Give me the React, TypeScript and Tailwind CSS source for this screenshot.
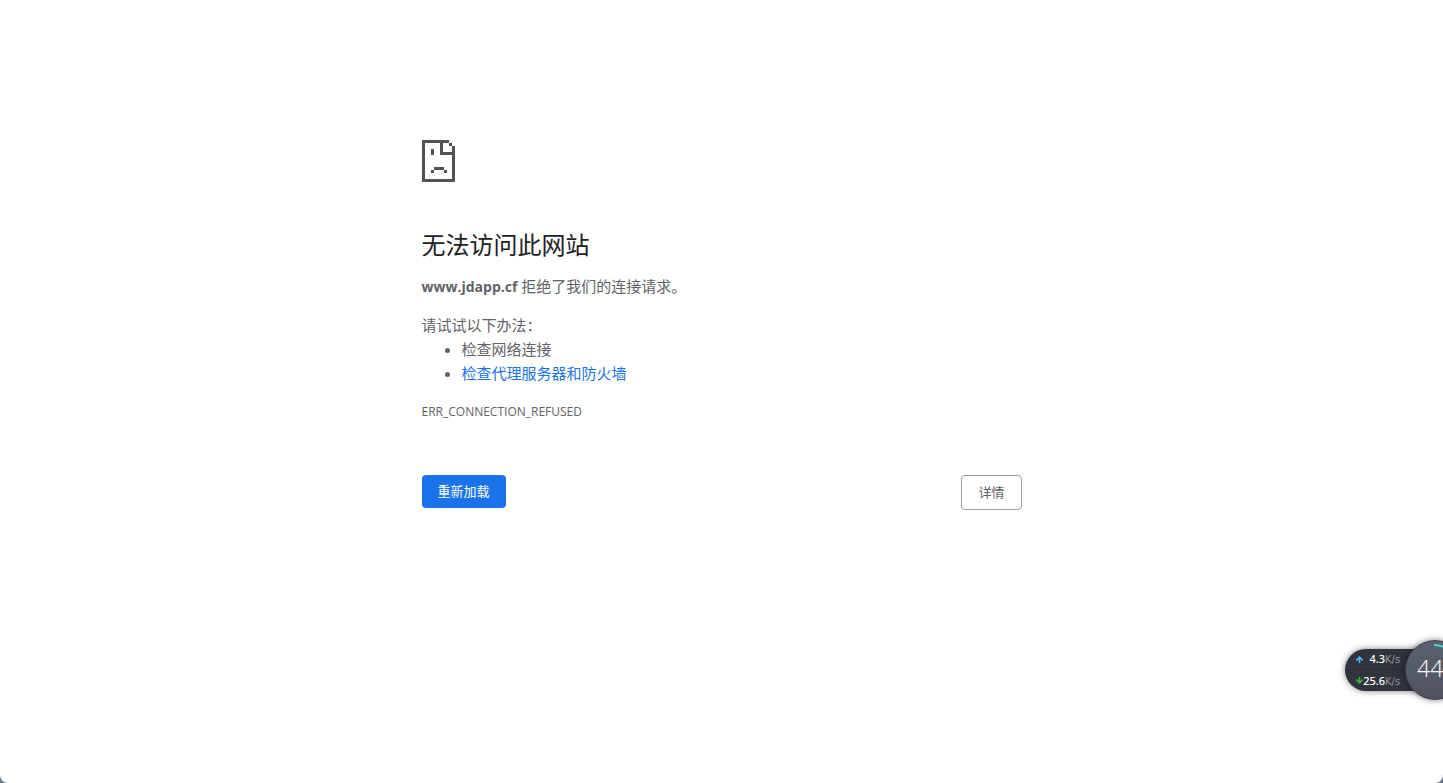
import React from 'react';

const SUGGESTIONS = [
  { text: '检查网络连接', href: '' },
  { text: '检查代理服务器和防火墙', href: '#proxy' },
];

function SadPageIcon() {
  return (
    <svg width="33" height="42" viewBox="0 0 33 42" fill="#535353" shapeRendering="crispEdges" aria-hidden="true">
      <path d="M0 0h27v3h3v3h3v36H0zM3 3v36h27V15H18V3zM21 3v9h9V6h-3V3z" fillRule="evenodd" />
      <path d="M9 9h3v6H9zM12 27h10v3H12zM9 30h3v3H9zM22 30h3v3h-3z" />
    </svg>
  );
}

function SpeedArrow({ up }: { up?: boolean }) {
  return (
    <svg width="7" height="7" viewBox="0 0 7 7" fill={up ? '#4db8f0' : '#35b53c'} aria-hidden="true">
      <path d={up ? 'M3.5 0L7 3.5v1.2H5.8L4.3 3.2V7H2.7V3.2L1.2 4.7H0V3.5z' : 'M3.5 7L7 3.5V2.3H5.8L4.3 3.8V0H2.7v3.8L1.2 2.3H0v1.2z'} />
    </svg>
  );
}

function SpeedRow({ value, up }: { value: string; up?: boolean }) {
  return (
    <div className="flex h-[21px] items-center pl-[11px]">
      <SpeedArrow up={up} />
      <span className="flex w-[22px] justify-end text-[11px] font-medium text-white">{value}</span>
      <span className="pt-0.5 font-['DejaVu_Sans',sans-serif] text-[10px] text-[#92959c]">K/s</span>
    </div>
  );
}

function NetworkWidget() {
  return (
    <div className="absolute right-0 top-[632px] h-[76px] w-[110px] overflow-hidden font-['Noto_Sans',sans-serif]">
      <div className="absolute left-3 top-[17px] h-[42px] w-[98px] divide-y divide-[#292d35] rounded-l-full bg-[#30343d] shadow-[0_0_6px_rgba(0,0,0,0.5)]">
        <SpeedRow value="4.3" up />
        <SpeedRow value="25.6" />
      </div>
      <div className="absolute left-[72px] top-2 h-[60px] w-[60px] rounded-full border border-[#3c404b] bg-linear-to-b from-[#5c6270] to-[#4e535f] shadow-[0_0_6px_rgba(0,0,0,0.5)]">
        <svg className="absolute inset-0" width="58" height="58" viewBox="0 0 58 58" fill="none" aria-hidden="true">
          <path d="M28 4a25 25 0 0 1 14 4.3" stroke="#3fd9cf" strokeWidth="2" />
        </svg>
        <span className="absolute left-[11px] top-3 font-['Open_Sans',sans-serif] text-[23px] leading-[30px] font-light text-white">44</span>
      </div>
    </div>
  );
}

export default function App() {
  return (
    <div className="min-h-screen bg-[#6b7785]">
      <div className="relative min-h-screen overflow-hidden rounded-b-lg bg-white px-6 pt-[140px] font-['Open_Sans','Noto_Sans_CJK_SC',sans-serif] text-[15px] leading-6 text-[#5f6368]" lang="zh-CN">
        <main className="mx-auto max-w-[600px]">
          <SadPageIcon />
          <h1 className="mt-[47px] font-['Noto_Sans_CJK_SC',sans-serif] text-2xl leading-[30px] text-[#202124]">无法访问此网站</h1>
          <p className="mt-[15px]">
            <strong className="text-sm leading-6 font-bold">www.jdapp.cf</strong> 拒绝了我们的连接请求。
          </p>
          <p className="mt-3.5">请试试以下办法：</p>
          <ul className="list-disc pl-10">
            {SUGGESTIONS.map((s) => (
              <li key={s.text}>
                {s.href ? <a href={s.href} className="text-[#1a73e8]">{s.text}</a> : s.text}
              </li>
            ))}
          </ul>
          <div className="mt-[15px] text-xs leading-6">ERR_CONNECTION_REFUSED</div>

          <div className="mt-[51px] flex items-start justify-between text-[13px] leading-[17px]">
            <button type="button" className="rounded bg-[#1a73e8] px-4 py-2 text-white">重新加载</button>
            <button type="button" className="rounded border border-[#9aa0a6] bg-white px-4 py-2">详情</button>
          </div>
        </main>
        <NetworkWidget />
      </div>
    </div>
  );
}
